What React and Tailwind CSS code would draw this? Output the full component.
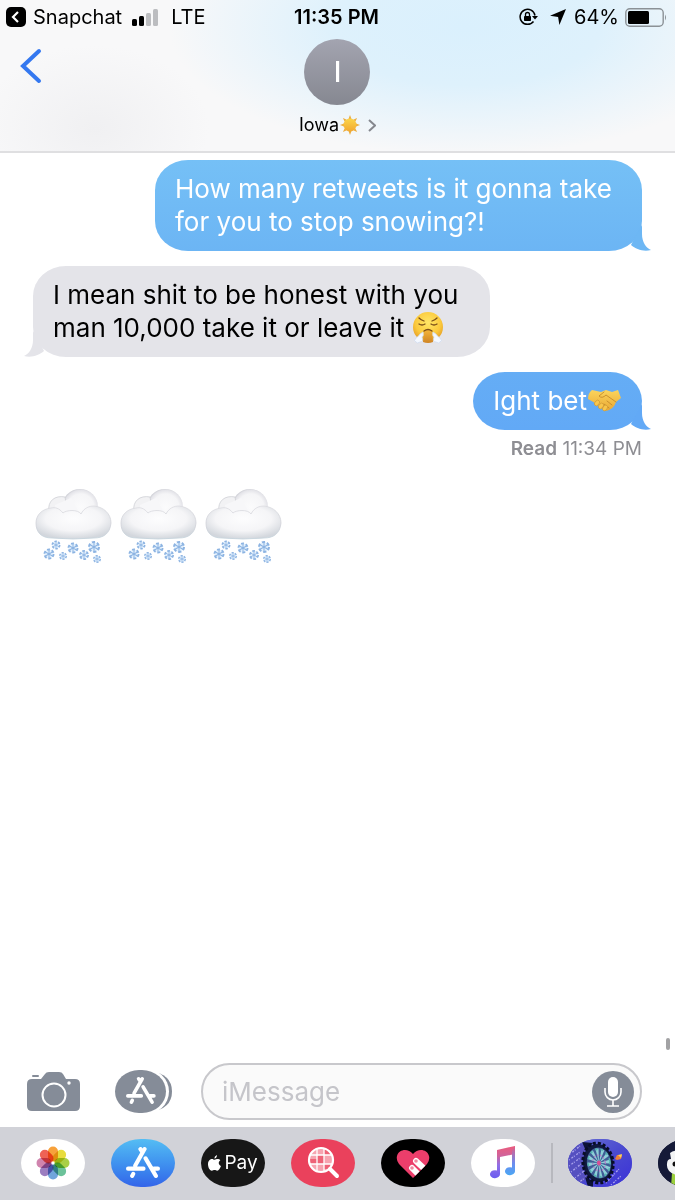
import React, { useState } from 'react';

const SNOWFLAKES = [
  { x: 21, y: 57, r: 4.5 },
  { x: 14, y: 66, r: 5.5 },
  { x: 28, y: 68, r: 4 },
  { x: 38, y: 60, r: 5.5 },
  { x: 49, y: 67, r: 5 },
  { x: 59, y: 59, r: 6 },
  { x: 62, y: 71, r: 4 },
];

const PETALS = [
  '#f7a13b', '#e8dc3e', '#a9cf46', '#6cc29a',
  '#70a5dc', '#9b7dc0', '#d084ae', '#ee6355',
];

function SnowCloud() {
  return (
    <svg width="77" height="78" viewBox="0 0 77 78" role="img" aria-label="Cloud with snow">
      <defs>
        <radialGradient id="puff" cx="52%" cy="50%" r="52%">
          <stop offset="0" stopColor="#fbfbfc" />
          <stop offset="0.7" stopColor="#f5f5f7" />
          <stop offset="0.9" stopColor="#e4e4e9" />
          <stop offset="1" stopColor="#c9cad1" />
        </radialGradient>
        <radialGradient id="body" cx="50%" cy="38%" r="62%">
          <stop offset="0" stopColor="#fdfdfe" />
          <stop offset="0.6" stopColor="#f5f5f7" />
          <stop offset="1" stopColor="#d3d7dd" />
        </radialGradient>
        <linearGradient id="bodyEdge" x1="0" y1="0" x2="0" y2="1">
          <stop offset="0" stopColor="#dcdce1" />
          <stop offset="0.6" stopColor="#cfd0d7" />
          <stop offset="1" stopColor="#c3d3dc" />
        </linearGradient>
      </defs>
      <circle cx="45" cy="19" r="18" fill="url(#puff)" />
      <path d="M14 24C12 13 20 7 30 9Q31 11 30 17L27 28Z" fill="#f2f2f4" stroke="#cfd0d6" strokeWidth="0.8" />
      <path d="M20 17L36 10L46 28L22 34Z" fill="#f7f7f9" />
      <path
        d="M16 20C20 19 24 20 28 25C31 22 43 21 46 26C49 20 54 18 59 18C69 19 76 26 76 35C75 46 68 50 59 50Q38 52 17 50C6 50 1 44 1 35C1 27 7 21 16 20Z"
        fill="url(#body)" stroke="url(#bodyEdge)" strokeWidth="0.8"
      />
      {SNOWFLAKES.map(({ x, y, r }) => (
        <g key={`${x}-${y}`} transform={`translate(${x} ${y}) scale(${r / 6})`} stroke="#8db4e2" fill="none">
          <circle r="5" fill="#e4f1fd" strokeWidth="2" strokeDasharray="3.2 2" />
          <path d="M0 -5V5M-4.300 -2.500L4.300 2.500M-4.300 2.500L4.300 -2.500" strokeWidth="1.1" />
        </g>
      ))}
    </svg>
  );
}

function SunEmoji() {
  return (
    <svg width="20" height="20" viewBox="0 0 20 20" role="img" aria-label="Sun">
      <defs>
        <linearGradient id="sun" x1="0" y1="0" x2="0" y2="1">
          <stop offset="0" stopColor="#fbd54a" />
          <stop offset="1" stopColor="#f2a831" />
        </linearGradient>
      </defs>
      {[0, 45, 90, 135, 180, 225, 270, 315].map((deg) => (
        <path key={deg} d="M10 0L11.5 4H8.5Z" fill="#ecac3c" transform={`rotate(${deg} 10 10)`} />
      ))}
      <circle cx="10" cy="10" r="6.5" fill="url(#sun)" />
    </svg>
  );
}

function SteamFace() {
  return (
    <svg
      className="inline-block align-top"
      width="32" height="33" viewBox="0 0 32 33" role="img" aria-label="Face with steam from nose">
      <defs>
        <radialGradient id="face" cx="50%" cy="35%" r="65%">
          <stop offset="0" stopColor="#ffe667" />
          <stop offset="0.65" stopColor="#fbc93c" />
          <stop offset="1" stopColor="#e39a24" />
        </radialGradient>
        <linearGradient id="nose" x1="0" y1="0" x2="0" y2="1">
          <stop offset="0" stopColor="#f5b73a" />
          <stop offset="1" stopColor="#cf8424" />
        </linearGradient>
      </defs>
      <circle cx="16" cy="16" r="15" fill="url(#face)" />
      <path d="M12 20Q16 17 20 20L21 31Q16 33 11 31Z" fill="url(#nose)" />
      <g fill="none" stroke="#7a4d18" strokeLinecap="round" strokeWidth="1.3">
        <path d="M7 7Q9 9 12 10M25 7Q23 9 20 10" />
        <path d="M7 13Q10 15 13 13M19 13Q22 15 25 13" />
        <path d="M12 20Q16 17 20 20" />
      </g>
      <path
        d="M11 21Q12 25 10 26Q12 31 8 31Q5 33 4 31Q1 30 4 27Q7 25 8 23Z"
        fill="#f4f8ff" stroke="#ccd9ee" strokeWidth="0.7"
      />
      <path
        d="M21 21Q20 25 22 26Q20 31 24 31Q27 33 28 31Q31 30 28 27Q25 25 24 23Z"
        fill="#f4f8ff" stroke="#ccd9ee" strokeWidth="0.7"
      />
    </svg>
  );
}

function Handshake() {
  return (
    <svg
      className="inline-block align-top"
      width="35" height="33" viewBox="0 0 35 33" role="img" aria-label="Handshake">
      <defs>
        <linearGradient id="hand" x1="0" y1="0" x2="0" y2="1">
          <stop offset="0" stopColor="#fbd45c" />
          <stop offset="1" stopColor="#e9a935" />
        </linearGradient>
      </defs>
      <path
        d="M5 6L14 8L19 6L25 8L31 6L34 14L29 18Q27 24 22 26Q18 28 15 24L8 19L1 15Q1 9 5 6Z"
        fill="url(#hand)"
      />
      <g fill="none" stroke="#c48a2a" strokeLinecap="round" strokeWidth="0.9">
        <path d="M17 8L12 12Q15 15 19 11L29 18" />
        <path d="M20 17L25 21M17 20L22 24" />
      </g>
      <g fill="#f8c64c" stroke="#d19a34" strokeWidth="0.7">
        <rect x="8" y="16" width="4" height="6" rx="2" transform="rotate(38 10 19)" />
        <rect x="12" y="19" width="4" height="6" rx="2" transform="rotate(38 14 22)" />
        <rect x="16" y="21" width="4" height="6" rx="2" transform="rotate(32 18 24)" />
      </g>
    </svg>
  );
}

function AppStoreGlyph() {
  return (
    <g fill="none" stroke="currentColor" strokeWidth="4" strokeLinecap="round">
      <path d="M18 2L9 18M14 2L16 5M19 11L29 28M2 21H17M27 21H31M7 26L6 28" />
    </g>
  );
}

function Tail({ side, color }) {
  const place = side === 'right' ? '-right-[9px]' : '-left-[9px] -scale-x-100';
  return (
    <svg className={`absolute bottom-0 ${place}`} width="32" height="30" viewBox="0 0 32 30" aria-hidden="true">
      <path d="M23 4V13C23 21 27 27 32 29C24 31 17 28 12 24L14 20Z" fill={color} />
    </svg>
  );
}

function Bubble({ side, tail, className, children }) {
  return (
    <div className={`relative w-fit rounded-[33px/30px] px-5 pt-3 pb-[13px] text-[26px] leading-[33px] ${className}`}>
      <Tail side={side} color={tail} />
      <p className="relative">{children}</p>
    </div>
  );
}

function StatusBar() {
  return (
    <div className="grid h-[34px] grid-cols-[1fr_auto_1fr] items-center pl-[6px] pr-2 text-[20px] leading-6 text-black">
      <div className="flex items-center">
        <a href="#snapchat" className="flex items-center gap-[7px]">
          <svg width="20" height="20" viewBox="0 0 20 20" aria-hidden="true">
            <rect width="20" height="20" rx="5" fill="#000" />
            <path d="M12 5L7 10L12 15" fill="none" stroke="#fff" strokeWidth="2.2" />
          </svg>
          Snapchat
        </a>
        <svg className="ml-[10px]" width="27" height="17" viewBox="0 0 27 17" aria-hidden="true">
          <rect x="0" y="10" width="5" height="7" rx="1.5" />
          <rect x="7" y="7" width="5" height="10" rx="1.5" />
          <rect x="14" y="4" width="5" height="13" rx="1.5" fill="#bcbdc0" />
          <rect x="21" y="0" width="5" height="17" rx="1.5" fill="#bcbdc0" />
        </svg>
        <span className="ml-3">LTE</span>
      </div>
      <span className="font-semibold">11:35 PM</span>
      <div className="flex items-center justify-end">
        <svg width="19" height="18" viewBox="0 0 19 18" aria-label="Rotation locked">
          <path d="M14.500 13.500A7.500 7.500 0 1 1 16 7.500" fill="none" stroke="#000" strokeWidth="1.5" />
          <path d="M13 8H19L16 11.5Z" />
          <rect x="5" y="8" width="7" height="5" rx="0.8" />
          <path d="M6.500 8V6.500a2 2 0 0 1 4 0V8" fill="none" stroke="#000" strokeWidth="1.3" />
        </svg>
        <svg className="ml-3" width="16" height="16" viewBox="0 0 15 15" aria-label="Location in use">
          <path d="M15 0L8.8 15L7.6 7.6L0 6.4Z" />
        </svg>
        <span className="ml-2">64%</span>
        <svg className="ml-[6px]" width="42" height="19" viewBox="0 0 42 19" aria-label="Battery">
          <rect x="0.8" y="0.8" width="37.4" height="17.4" rx="4" fill="none" stroke="#8b9196" strokeWidth="1.4" />
          <rect x="3" y="3" width="21" height="13" rx="1.5" />
          <path d="M40 6.5Q42 9.5 40 12.5Z" fill="#8b9196" />
        </svg>
      </div>
    </div>
  );
}

function Header() {
  return (
    <header className="h-[153px] border-b-2 border-[#dfdfe1] bg-[#f8f8f9] bg-[radial-gradient(ellipse_44%_85%_at_69%_18%,#daf0fd_0%,#def1fc_45%,transparent_100%),radial-gradient(ellipse_17%_55%_at_14%_85%,#f0f0f2_0%,transparent_100%)]">
      <StatusBar />
      <div className="grid grid-cols-[1fr_auto_1fr] items-start pt-[5px]">
        <button type="button" aria-label="Back" className="ml-5 mt-2 w-fit">
          <svg width="22" height="37" viewBox="0 0 22 37" aria-hidden="true">
            <path d="M19 4L3 19L19 34" fill="none" stroke="#3478f0" strokeWidth="4" strokeLinecap="round" />
          </svg>
        </button>
        <button type="button" className="flex flex-col items-center">
          <span className="flex size-[66px] items-center justify-center rounded-full bg-linear-to-b from-[#a3a4b0] to-[#868891] text-[28px] font-medium text-white">
            I
          </span>
          <span className="mt-2 flex items-center text-[18px] leading-6 text-black">
            Iowa
            <span className="ml-[1px]">
              <SunEmoji />
            </span>
            <svg className="ml-2" width="8" height="13" viewBox="0 0 8 13" aria-hidden="true">
              <path d="M1 1L7 6.5L1 12" fill="none" stroke="#85878e" strokeWidth="2" />
            </svg>
          </span>
        </button>
      </div>
    </header>
  );
}

function Composer() {
  const [text, setText] = useState('');

  return (
    <form className="flex items-center pb-[7px] pl-[27px] pr-[33px]" onSubmit={(e) => e.preventDefault()}>
      <button type="button" aria-label="Camera" className="shrink-0">
        <svg width="53" height="40" viewBox="0 0 53 40" aria-hidden="true">
          <path
            d="M5 7H14L18 2Q19 0 22 0H32Q35 0 36 2L39 7H48Q53 7 53 12V34Q53 39 48 39H5Q0 39 0 34V12Q0 7 5 7Z"
            fill="#858c98"
          />
          <rect x="5" y="3" width="7" height="2" rx="1" fill="#858c98" />
          <circle cx="27" cy="23" r="11.5" fill="none" stroke="#fff" strokeWidth="2" />
          <circle cx="42" cy="11" r="1.7" fill="#fff" />
        </svg>
      </button>
      <button type="button" aria-label="Apps" className="ml-[35px] shrink-0 text-white">
        <svg width="58" height="43" viewBox="0 0 58 43" aria-hidden="true">
          <path d="M35 1Q57 4 57 21.500T35 42Z" fill="#858c98" />
          <rect x="-2" y="-2" width="56" height="47" rx="25" fill="#fff" />
          <rect x="0" y="0" width="51" height="43" rx="24" ry="21.500" fill="#858c98" />
          <g transform="translate(11 7) scale(0.9)">
            <AppStoreGlyph />
          </g>
        </svg>
      </button>
      <div className="ml-7 flex h-[57px] min-w-0 flex-1 items-center rounded-full border-2 border-[#c8c8cc] bg-[#fafafa] pl-[19px] pr-[6px]">
        <input
          type="text"
          aria-label="iMessage"
          value={text}
          onChange={(e) => setText(e.target.value)}
          placeholder="iMessage"
          className="min-w-0 flex-1 bg-transparent text-[26px] leading-8 text-black outline-none placeholder:text-[#c5c5ca]"
        />
        <button type="button" aria-label="Record audio" className="shrink-0">
          <svg width="42" height="42" viewBox="0 0 42 42" aria-hidden="true">
            <circle cx="21" cy="21" r="21" fill="#858c98" />
            <rect x="16" y="6" width="10" height="20" rx="5" fill="#fff" />
            <path d="M13 17V21A8 8 0 0 0 29 21V17M21 29V35M15 35H27" fill="none" stroke="#fff" strokeWidth="1.6" />
          </svg>
        </button>
      </div>
    </form>
  );
}

function AppPill({ label, className, children }) {
  return (
    <button
      type="button"
      aria-label={label}
      className={`flex h-12 w-16 shrink-0 items-center justify-center overflow-hidden rounded-[30px/24px] ${className}`}>
      {children}
    </button>
  );
}

function PhotosIcon() {
  return (
    <svg width="34" height="34" viewBox="-17 -17 34 34" aria-hidden="true">
      {PETALS.map((color, i) => (
        <rect
          key={color}
          x="-5" y="-16.5" width="10" height="15" rx="5"
          fill={color}
          className="mix-blend-multiply"
          transform={`rotate(${i * 45})`}
        />
      ))}
    </svg>
  );
}

function ApplePayIcon() {
  return (
    <span className="flex items-center gap-[3px] text-[19px] leading-6 text-white">
      <svg width="13" height="16" viewBox="0 0 13 16" fill="currentColor" aria-hidden="true">
        <path d="M9 0Q9 3 6.300 3.600Q6.300 1 9 0Z" />
        <path d="M6.500 4.800C8 4.800 10 3 12.300 5.200C10 6.800 10.300 9.800 13 11C12 13.500 10.700 15.700 9.300 15.700C8 15.700 7.800 15 6.600 15C5.400 15 5 15.700 3.800 15.700C1.500 15.700 0 12 0 9C0 5.500 2.300 4 4 4C5 4 5.800 4.800 6.500 4.800Z" />
      </svg>
      Pay
    </span>
  );
}

function ImagesIcon() {
  return (
    <svg width="34" height="34" viewBox="0 0 34 34" aria-hidden="true">
      <circle cx="15" cy="14" r="12" fill="#f6a4b0" />
      <path d="M11 9h7v9h-7zM4 13h7v5H4zM18 4h6v5h-6zM18 18h6v5h-6z" fill="#ee6377" />
      <path d="M11 3V25M18 3V25M4 9H26M4 18H26" stroke="#fff" strokeWidth="1.3" />
      <circle cx="15" cy="14" r="12" fill="none" stroke="#fff" strokeWidth="2.2" />
      <path d="M24 23L31 30" stroke="#fff" strokeWidth="4" strokeLinecap="round" />
    </svg>
  );
}

function HeartIcon() {
  return (
    <svg className="mt-[2px]" width="34" height="30" viewBox="0 0 34 30" aria-hidden="true">
      <defs>
        <clipPath id="heart">
          <path d="M17 29L3 15Q0 11 1 7C3 0 12 -1 17 5C22 -1 31 0 33 7Q34 11 31 15Z" />
        </clipPath>
      </defs>
      <g clipPath="url(#heart)">
        <rect width="34" height="30" fill="#ec3e6b" />
        <g stroke="#fff" strokeWidth="6" strokeLinecap="round">
          <path d="M16 19L27 30M20 12L34 25" />
        </g>
        <g fill="#ef8ba3">
          <circle cx="16" cy="19" r="1.8" />
          <circle cx="20" cy="12" r="1.8" />
        </g>
      </g>
    </svg>
  );
}

function MusicIcon() {
  return (
    <svg width="28" height="34" viewBox="0 0 28 34" aria-hidden="true">
      <defs>
        <linearGradient id="note" x1="0" y1="0" x2="0" y2="1">
          <stop offset="0" stopColor="#ec5b7b" />
          <stop offset="0.3" stopColor="#d0639b" />
          <stop offset="0.6" stopColor="#8f70e8" />
          <stop offset="1" stopColor="#6b5cf0" />
        </linearGradient>
        <linearGradient id="noteRight" x1="0" y1="0" x2="0" y2="1">
          <stop offset="0" stopColor="#e55a83" />
          <stop offset="0.6" stopColor="#6b8cf0" />
          <stop offset="1" stopColor="#4ba7f3" />
        </linearGradient>
      </defs>
      <path d="M8 4L26 0V8L11 11V28A5 4 0 1 1 8 24.500Z" fill="url(#note)" />
      <path d="M23 5L26 0V25A5 4 0 1 1 23 21.500Z" fill="url(#noteRight)" />
    </svg>
  );
}

function DartsIcon() {
  return (
    <svg width="64" height="48" viewBox="0 0 64 48" aria-hidden="true">
      <defs>
        <linearGradient id="arena" x1="0" y1="0" x2="1" y2="1">
          <stop offset="0" stopColor="#6b74d4" />
          <stop offset="0.5" stopColor="#4b4bd0" />
          <stop offset="1" stopColor="#3a30d8" />
        </linearGradient>
      </defs>
      <rect width="64" height="48" fill="url(#arena)" />
      <ellipse cx="10" cy="24" rx="13" ry="20" fill="#5550c0" />
      <path
        d="M2 15L12 7M1 21L12 13M1 27L12 19M3 33L13 25M7 39L16 32M10 44L18 38M38 44L51 30M43 46L53 37"
        stroke="#a9a2ec" strokeWidth="1.3" strokeDasharray="1 2 2 1"
      />
      <path d="M14 3L25 4L18 12ZM17 38L25 42V48H20Z" fill="#0c1238" />
      <ellipse cx="30" cy="24" rx="15" ry="19" fill="#10183f" transform="rotate(-8 30 24)" />
      <ellipse
        cx="30" cy="24" rx="15" ry="20" fill="none"
        stroke="#080d26" strokeWidth="3" strokeDasharray="3 2" transform="rotate(-8 30 24)"
      />
      <g transform="translate(31 24) rotate(-8) scale(0.78 1)">
        <circle r="15.500" fill="#3f5d96" />
        {[0, 30, 60, 90, 120, 150, 180, 210, 240, 270, 300, 330].map((deg) => (
          <path key={deg} d="M0 0L-2 -14.500H2Z" fill="#8fd0d8" transform={`rotate(${deg})`} />
        ))}
        <circle r="14" fill="none" stroke="#56b5b0" strokeWidth="2" strokeDasharray="3 4" />
        <circle r="8" fill="none" stroke="#b57ac4" strokeWidth="1.4" strokeDasharray="2 2" />
        <circle r="2.500" fill="#d84f96" />
      </g>
      <path d="M47 20L49 16L54 16L53 20L49 21Z" fill="#ee7f3c" />
      <path d="M50 16L54 15L53 19Z" fill="#f9d25a" />
    </svg>
  );
}

function CreatureIcon() {
  return (
    <svg width="64" height="48" viewBox="0 0 64 48" aria-hidden="true">
      <rect width="64" height="48" fill="#151a38" />
      <path d="M13 48L14 34L28 37L44 34L48 48Z" fill="#9bcf3c" />
      <path d="M12 14Q18 10 27 12Q44 14 42 28Q38 39 22 37Q8 34 9 25Q9 20 13 20Z" fill="#f3f4f5" />
      <circle cx="17" cy="25" r="2.500" fill="#101010" />
      <circle cx="33" cy="25" r="2.500" fill="#101010" />
    </svg>
  );
}

function AppDrawer() {
  return (
    <nav aria-label="iMessage apps" className="flex h-[73px] items-start gap-[26px] overflow-hidden bg-[#d1d2d8] pl-[21px] pt-3">
      <AppPill label="Photos" className="bg-white"><PhotosIcon /></AppPill>
      <AppPill label="App Store" className="bg-linear-to-b from-[#55bdf3] to-[#3464e9] text-white">
        <svg width="34" height="32" viewBox="0 0 33 31" aria-hidden="true">
          <AppStoreGlyph />
        </svg>
      </AppPill>
      <AppPill label="Apple Pay" className="bg-[#171717]"><ApplePayIcon /></AppPill>
      <AppPill label="Images" className="bg-[#ea415c]"><ImagesIcon /></AppPill>
      <AppPill label="Digital Touch" className="bg-black"><HeartIcon /></AppPill>
      <AppPill label="Music" className="bg-white"><MusicIcon /></AppPill>
      <div className="-ml-[10px] flex shrink-0 items-start gap-[15px]">
        <span className="mt-1 h-10 w-[2px] bg-[#b7b8be]" />
        <AppPill label="Darts" className="bg-[#4b4bd0]"><DartsIcon /></AppPill>
      </div>
      <AppPill label="Game" className="bg-[#151a38]"><CreatureIcon /></AppPill>
    </nav>
  );
}

export default function App() {
  return (
    <div className="flex min-h-screen flex-col bg-white font-['Inter','Liberation_Sans',sans-serif]">
      <Header />
      <main className="relative flex flex-1 flex-col px-[33px] pt-[7px]">
        <Bubble
          side="right"
          tail="#6db7f4"
          className="max-w-[487px] self-end bg-linear-to-b from-[#75c0f6] to-[#6cb5f4] text-white">
          How many retweets is it gonna take for you to stop snowing?!
        </Bubble>
        <Bubble side="left" tail="#e4e4e9" className="mt-[15px] max-w-[457px] bg-[#e4e4e9] text-black">
          I mean shit to be honest with you man 10,000 take it or leave it <SteamFace />
        </Bubble>
        <Bubble
          side="right"
          tail="#62a9f6"
          className="mt-[15px] self-end bg-linear-to-b from-[#65adf5] to-[#62a9f6] text-white">
          Ight bet<Handshake />
        </Bubble>
        <p className="mt-[7px] self-end text-[19px] leading-6 text-[#8e8e93]">
          <span className="font-semibold">Read</span> 11:34 PM
        </p>
        <div className="mt-[27px] ml-[2px] flex gap-2">
          <SnowCloud />
          <SnowCloud />
          <SnowCloud />
        </div>
        <span className="absolute right-[5px] bottom-[13px] h-3 w-1 rounded-full bg-[#a2a2a4]" />
      </main>
      <Composer />
      <AppDrawer />
    </div>
  );
}
